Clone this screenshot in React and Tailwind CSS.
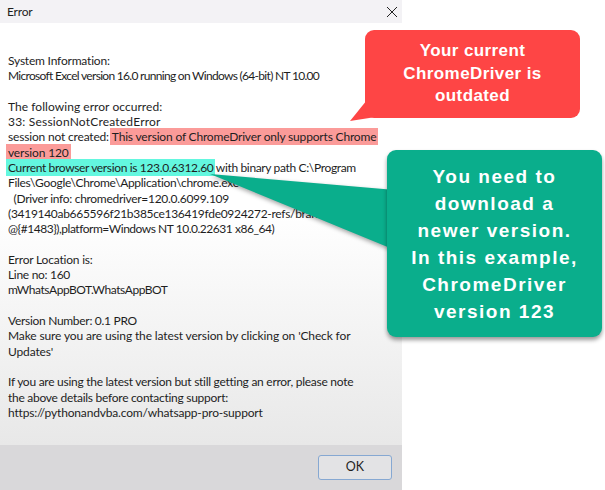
import React from "react";

const Red = ({ children }) => (
  <span className="bg-[#fb9b99] px-[2px] -mx-[2px] py-[1px]">{children}</span>
);
const Cyan = ({ children }) => (
  <span className="bg-[#63f7df] px-[2px] -mx-[2px] py-[1px]">{children}</span>
);

const lines = [
  ["System Information:", "tracking-[-0.2px]"],
  ["Microsoft Excel version 16.0 running on Windows (64-bit) NT 10.00", "tracking-[-0.7px]"],
  ["", ""],
  ["The following error occurred:", "tracking-[0.05px]"],
  ["33: SessionNotCreatedError", "tracking-[0.2px]"],
  [<>session not created: <Red>This version of ChromeDriver only supports Chrome</Red></>, "tracking-[-0.18px]"],
  [<Red>version 120</Red>, "tracking-[-0.15px]"],
  [<><Cyan>Current browser version is 123.0.6312.60</Cyan> with binary path C:\Program</>, "tracking-[-0.35px]"],
  ["Files\\Google\\Chrome\\Application\\chrome.exe", "tracking-[-0.3px]"],
  ["\u00a0\u00a0(Driver info: chromedriver=120.0.6099.109", "tracking-[-0.3px]"],
  ["(3419140ab665596f21b385ce136419fde0924272-refs/branch-heads/6099", "tracking-[-0.3px]"],
  ["@{#1483}),platform=Windows NT 10.0.22631 x86_64)", "tracking-[-0.47px]"],
  ["", ""],
  ["Error Location is:", "tracking-[-0.2px]"],
  ["Line no: 160", "tracking-[-0.3px]"],
  ["mWhatsAppBOT.WhatsAppBOT", "tracking-[-0.45px]"],
  ["", ""],
  ["Version Number: 0.1 PRO", "tracking-[-0.3px]"],
  ["Make sure you are using the latest version by clicking on 'Check for", "tracking-[-0.13px]"],
  ["Updates'", "tracking-[-0.13px]"],
  ["", ""],
  ["If you are using the latest version but still getting an error, please note", "tracking-[-0.27px]"],
  ["the above details before contacting support:", "tracking-[-0.27px]"],
  ["https://pythonandvba.com/whatsapp-pro-support", "tracking-[-0.17px]"],
];

export default function App() {
  return (
    <div className="relative w-[605px] h-[490px] bg-white overflow-hidden">
      <div className="w-[402px] h-full flex flex-col font-['Lato',sans-serif] text-[12px] text-[#1e1e1e]">
        <div className="h-[23px] bg-[#f3f2f5] flex items-center justify-between pl-[7px] pr-[3px]">
          <span className="leading-none tracking-[-0.2px]">Error</span>
          <svg width="12" height="12" viewBox="0 0 12 12" className="mr-[1px]">
            <path d="M1 1 L11 11 M11 1 L1 11" stroke="#222" strokeWidth="1" fill="none" />
          </svg>
        </div>
        <div className="flex-1 overflow-hidden bg-gradient-to-b from-white via-white via-45% to-[#e8e8e8] pt-[30px] pl-[8px]">
          {lines.map(([l, cls], i) => (
            <div key={i} className={`h-[15.3px] leading-[15.3px] whitespace-nowrap ${cls}`}>
              {l === "" ? "\u00a0" : l}
            </div>
          ))}
        </div>
        <div className="h-[45px] bg-[#d9d8da] flex items-center justify-end pr-[10px]">
          <button className="w-[74px] h-[25px] rounded-[3px] border border-[#86a8d2] bg-[#e3e3e5] text-[12.5px] text-[#1e1e1e] flex items-center justify-center">
            OK
          </button>
        </div>
      </div>

      <svg className="absolute inset-0 pointer-events-none" width="605" height="490" viewBox="0 0 605 490">
        <polygon points="350,121 367,100 382,116" fill="#fe4545" />
        <g style={{ filter: "drop-shadow(0px 2px 2px rgba(0,0,0,0.35))" }}>
          <polygon points="210,174 395,190 395,250" fill="#0aae8c" />
        </g>
      </svg>

      <div className="absolute left-[365px] top-[30px] w-[215px] h-[88px] rounded-[9px] bg-[#fe4545] flex flex-col items-center justify-center text-white font-['Liberation_Sans',Arial,sans-serif] font-bold text-[17px] leading-[22.5px] tracking-[0.4px] text-center">
        <div>Your current</div>
        <div>ChromeDriver is</div>
        <div>outdated</div>
      </div>

      <div className="absolute left-[387px] top-[150px] w-[215px] h-[187px] rounded-[9px] bg-[#0aae8c] shadow-[0_3px_4px_rgba(0,0,0,0.4)] flex flex-col items-center justify-center text-white font-['Liberation_Sans',Arial,sans-serif] font-bold text-[19px] leading-[27px] tracking-[1.5px] text-center">
        <div>You need to</div>
        <div>download a</div>
        <div>newer version.</div>
        <div>In this example,</div>
        <div>ChromeDriver</div>
        <div>version 123</div>
      </div>
    </div>
  );
}
